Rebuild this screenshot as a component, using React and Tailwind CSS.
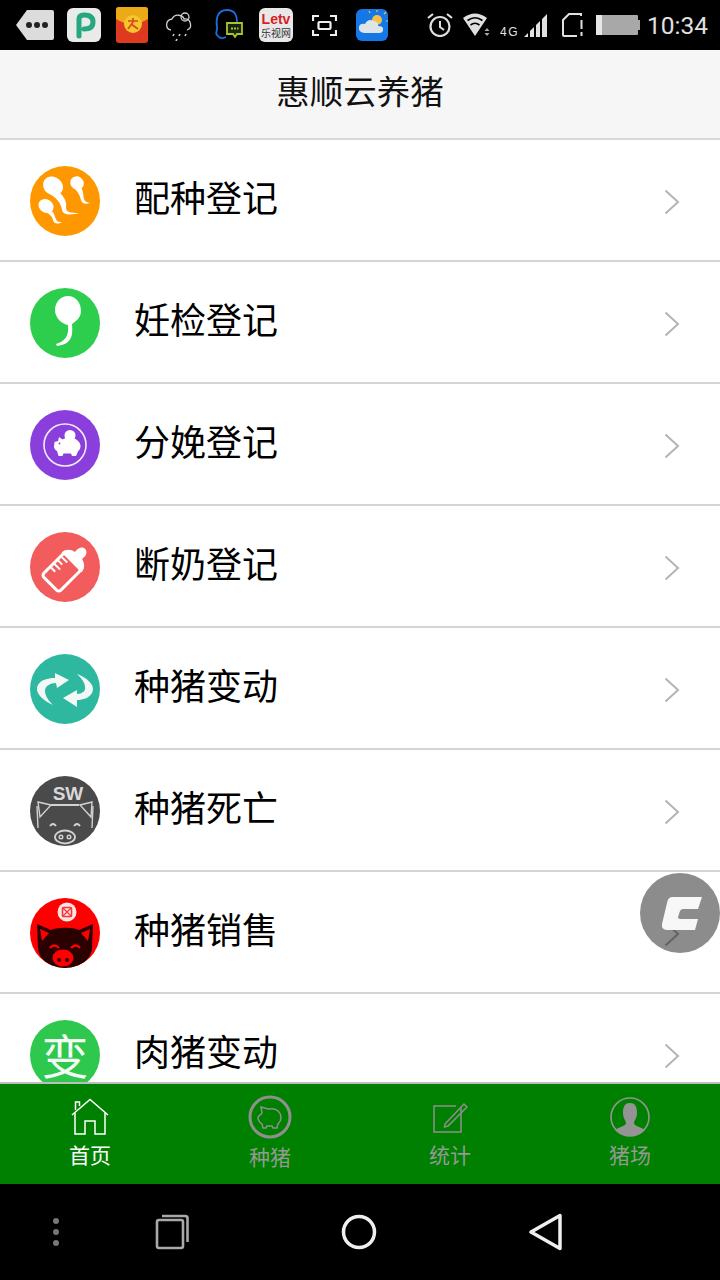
import React from 'react';

const rows = [
  { label: '配种登记', bg: 'bg-[#ff9800]', icon: <SpermsIcon /> },
  { label: '妊检登记', bg: 'bg-[#2dce4e]', icon: <SpermIcon /> },
  { label: '分娩登记', bg: 'bg-[#8a3fdc]', icon: <PiggyIcon /> },
  { label: '断奶登记', bg: 'bg-[#f25c5c]', icon: <BottleIcon /> },
  { label: '种猪变动', bg: 'bg-[#2fb8a0]', icon: <SwapIcon /> },
  { label: '种猪死亡', bg: 'bg-[#4a4a4a]', icon: <DeadPigIcon /> },
  { label: '种猪销售', bg: 'bg-[#ff0000]', icon: <SalePigIcon /> },
  { label: '肉猪变动', bg: 'bg-[#2dc84d]', icon: <span className="text-[47px] leading-[68px] text-[#f4fbf5] block text-center">变</span> },
];

function SpermsIcon() {
  return (
    <svg width="70" height="70" viewBox="0 0 70 70" fill="#fff">
      <ellipse cx="23" cy="20" rx="10.5" ry="9" transform="rotate(35 23 20)" />
      <path d="M27 24C35 31 37 36 36 42C36 46 40 47 49 47C40 49.5 33 49 32 44C31 38 28 33 20 28Z" />
      <ellipse cx="47" cy="17" rx="7" ry="6.5" transform="rotate(35 47 17)" />
      <path d="M50 20C54 25 53 30 54 33C55 36 57 36 60 37C56 38.5 52 38 51 34C50 30 49 27 44 22Z" />
      <ellipse cx="16" cy="40" rx="8" ry="6.5" transform="rotate(30 16 40)" />
      <path d="M19 43C25 46 24 50 26 53C27 56 29 56 32 56C28 58.5 24 58 23 54C22 50 20 48 13 45Z" />
    </svg>
  );
}

function SpermIcon() {
  return (
    <svg width="70" height="70" viewBox="0 0 70 70" fill="#fff">
      <path d="M38 8C46 8 51 15 51 23C51 30 45 34 42 36C43 48 42 56 27 58L26 56C36 53 39 47 38 37C32 36 25 30 25 22C25 14 31 8 38 8Z" />
    </svg>
  );
}

function PiggyIcon() {
  return (
    <svg width="70" height="70" viewBox="0 0 70 70">
      <circle cx="35" cy="35" r="21" fill="none" stroke="#f3ecfc" strokeWidth="1.6" />
      <circle cx="40" cy="25.5" r="5.5" fill="#fff" />
      <path d="M24.5 32L28 31L29 27L32.5 29.5C36 27.5 44 27.5 47 30C51 33 52 38 48 41.5L46 46L42 46L41 43.5L33.5 43.5L32.5 46L28.5 46L27 41C25.5 40 24 38.5 24 36.5Z" fill="#fff" />
      <circle cx="29.5" cy="33.5" r="0.9" fill="#8a3fdc" />
    </svg>
  );
}

function BottleIcon() {
  return (
    <svg width="70" height="70" viewBox="0 0 70 70">
      <g transform="translate(33 39) rotate(45)">
        <rect x="-12" y="-14" width="24" height="32" rx="3" fill="none" stroke="#fff" strokeWidth="3" />
        <path d="M-14 -12C-14 -18 -9 -21 -5 -22L5 -22C9 -21 14 -18 14 -12Z" fill="#fff" />
        <path d="M-5 -21C-5 -25 -6 -26 -4 -29C-2 -32 2 -32 4 -29C6 -26 5 -25 5 -21Z" fill="#fff" />
        <path d="M-11 -9H-3M-11 -4H-5M-11 1H-3M-11 6H-5" stroke="#fff" strokeWidth="2" />
      </g>
    </svg>
  );
}

function SwapIcon() {
  return (
    <svg width="70" height="70" viewBox="0 0 70 70" fill="#f2f8f6">
      <path d="M23 51C12 46 4 38 8 31C11 26 17 24 25 24L25 19L39 26L27 34L26 29C20 29 15 32 15 37C15 42 19 47 23 51Z" />
      <path d="M47 20C58 24 66 32 62 39C59 44 53 46 47 46L47 53L33 44L47 36L47 40C52 40 56 37 55 33C55 28 51 24 47 20Z" />
    </svg>
  );
}

function DeadPigIcon() {
  return (
    <svg width="70" height="70" viewBox="0 0 70 70" fill="none" stroke="#d2d2d2" strokeWidth="1.4">
      <text x="38" y="24" textAnchor="middle" fontFamily="Liberation Sans" fontWeight="700" fontSize="19" fill="#d8d8d8" stroke="none">SW</text>
      <path d="M21 29H49" strokeWidth="1.8" />
      <path d="M8 26L21 29L10 41ZM62 26L50 29L61 41Z" />
      <path d="M7 30L8 52M63 30L62 52" />
      <path d="M20 50Q23 46 26 50M44 50Q47 46 50 50" strokeWidth="2" />
      <ellipse cx="35" cy="61" rx="10" ry="6.5" strokeWidth="1.8" />
      <circle cx="31" cy="61" r="1.8" />
      <circle cx="39" cy="61" r="1.8" />
    </svg>
  );
}

function SalePigIcon() {
  return (
    <svg width="70" height="70" viewBox="0 0 70 70">
      <circle cx="37" cy="14" r="9.5" fill="#fbe6e6" />
      <rect x="32.5" y="9.5" width="9" height="9" rx="1" fill="none" stroke="#ff3030" strokeWidth="1.6" />
      <path d="M33 10L41 18M41 10L33 18" stroke="#ff3030" strokeWidth="1.2" />
      <path d="M7 26L21 32C27 29 43 29 49 32L63 26L62 50C62 60 50 71 35 71C20 71 8 60 8 50Z" fill="#2a0000" />
      <path d="M10 31L19 35L12 43ZM60 31L51 35L58 43Z" fill="#ff0000" />
      <path d="M20 50Q24 45 29 50M41 50Q46 45 50 50" fill="none" stroke="#ff0000" strokeWidth="2.4" />
      <ellipse cx="33" cy="60" rx="10.5" ry="8.5" fill="#ff0000" />
      <circle cx="29" cy="62" r="2" fill="#2a0000" />
      <circle cx="37" cy="62" r="2" fill="#2a0000" />
    </svg>
  );
}

function StatusBar() {
  return (
    <div className="h-[50px] shrink-0 bg-black flex items-center pl-[15px]">
      <svg width="40" height="32" viewBox="0 0 40 32" className="mr-[12px]">
        <path d="M12 1H37Q39 1 39 3V29Q39 31 37 31H12L1 16Z" fill="#dcdcdc" />
        <circle cx="14" cy="16" r="3" fill="#222" />
        <circle cx="22" cy="16" r="3" fill="#222" />
        <circle cx="30" cy="16" r="3" fill="#222" />
      </svg>
      <svg width="34" height="34" viewBox="0 0 34 34" className="mr-[15px]">
        <rect width="34" height="34" rx="6" fill="#e8ebe8" />
        <path d="M12 28V11Q12 7 17 7Q26 7 26 14Q26 21 17 21" fill="none" stroke="#27a77f" strokeWidth="5" strokeLinecap="round" />
      </svg>
      <svg width="32" height="36" viewBox="0 0 32 36" className="mr-[17px]">
        <rect width="32" height="36" rx="3" fill="#dd3a1f" />
        <path d="M0 3Q0 0 3 0H29Q32 0 32 3V12Q16 22 0 12Z" fill="#ecaa17" />
        <circle cx="17" cy="17" r="9" fill="#f4c52c" />
        <path d="M12 14H22M17 11V15L12 22M15 17L22 22" fill="none" stroke="#d8481c" strokeWidth="1.6" />
      </svg>
      <svg width="30" height="32" viewBox="0 0 30 32" className="mr-[19px]" fill="none" stroke="#cfcfcf" strokeWidth="1.3">
        <path d="M6 21C0 20 0 11 7 10C10 4 18 6 19 10C26 9 28 19 22 21" />
        <circle cx="20" cy="8" r="4" />
        <path d="M9 25L8 27M15 25L14 27M21 25L20 27M12 30L11 32" strokeWidth="1.6" />
      </svg>
      <svg width="30" height="32" viewBox="0 0 30 32" className="mr-[15px]" fill="none">
        <path d="M4 27C0 25 4 21 3 18C2 12 2 1 13 1C22 1 23 8 23 13" stroke="#1a6fe0" strokeWidth="1.8" />
        <path d="M4 27C6 30 10 29 12 28" stroke="#1a6fe0" strokeWidth="1.8" />
        <path d="M13 14H28V25H23L21 28L19 25H13Z" fill="#16240c" stroke="#a6c62c" strokeWidth="1.8" />
        <path d="M17 19.5H24.5" stroke="#a6c62c" strokeWidth="2" strokeDasharray="2 1" />
      </svg>
      <div className="w-[34px] h-[34px] mr-[19px] rounded-[6px] bg-[#e8e8e8] flex flex-col items-center justify-center leading-none overflow-hidden">
        <span className="text-[#d81f26] text-[14px] font-bold font-['Liberation_Sans',sans-serif] h-[15px] leading-[15px]">Letv</span>
        <span className="text-[#333] text-[10px] h-[12px] leading-[12px] font-['Noto_Sans_CJK_SC',sans-serif]">乐视网</span>
      </div>
      <svg width="25" height="21" viewBox="0 0 25 21" className="mr-[19px]" fill="none" stroke="#f0f0f0" strokeWidth="2.2">
        <path d="M1 6V1H7M18 1H24V6M24 15V20H18M7 20H1V15" />
        <rect x="6.5" y="7" width="12" height="7" rx="1" />
      </svg>
      <svg width="32" height="32" viewBox="0 0 32 32" className="mr-[39px]">
        <rect width="32" height="32" rx="6" fill="#1478e6" />
        <circle cx="21" cy="11" r="5" fill="#f3c04a" />
        <path d="M21 3V1M28 5L30 3M30 12H32M14 4L13 2" stroke="#f3c04a" strokeWidth="1.2" />
        <path d="M8 24Q2 23 3 18Q4 14 9 15Q12 9 18 12Q23 13 22 17Q28 17 27 21Q27 24 23 24Z" fill="#dfe5e6" />
      </svg>
      <svg width="26" height="24" viewBox="0 0 26 24" className="mr-[10px]" fill="none" stroke="#e0e0e0" strokeWidth="2.2">
        <circle cx="13" cy="13.5" r="9.5" />
        <path d="M13 8V14L17 17" strokeWidth="2" />
        <path d="M1 5L6 1M25 5L20 1" />
      </svg>
      <svg width="28" height="24" viewBox="0 0 28 24" className="mr-[9px]">
        <path d="M0 5Q12 -4 24 5L12 23Z" fill="#e0e0e0" />
        <path d="M4.5 7.5Q12 2 19.5 7.5M7.5 12Q12 8.5 16.5 12" fill="none" stroke="#000" strokeWidth="1.6" />
        <path d="M24 15L26.5 18H21.5ZM24 23L26.5 20H21.5Z" fill="#aaa" />
      </svg>
      <span className="mr-[6px] mt-[14px] text-[#e0e0e0] text-[12px] leading-[12px] w-[18px] tracking-[1.5px] font-['Liberation_Sans',sans-serif]">4G</span>
      <svg width="24" height="23" viewBox="0 0 24 23" className="mr-[14px] mt-[1px]" fill="#e0e0e0">
        <path d="M0 23L4 19V23ZM6 17L10 13V23H6ZM12 11L16 7V23H12ZM18 5L23 0V23H18Z" />
      </svg>
      <svg width="21" height="24" viewBox="0 0 21 24" className="mr-[13px]" fill="none" stroke="#e0e0e0" strokeWidth="2">
        <path d="M15 23H2Q1 23 1 22V7L7 1H19V3" />
        <path d="M19.5 7V16M19.5 19V23" />
      </svg>
      <div className="w-[44px] h-[20px] mr-[7px] flex">
        <div className="w-[6px] bg-[#e6e6e6]" />
        <div className="w-[36px] bg-[#a8a8a8] rounded-r-[1px]" />
        <div className="w-[2px] h-[10px] my-auto bg-[#a8a8a8]" />
      </div>
      <span className="text-[#e0e0e0] text-[24.5px] mt-[3px] font-['Roboto',sans-serif]">10:34</span>
    </div>
  );
}

function Row({ label, bg, icon }) {
  return (
    <div className="h-[122px] shrink-0 border-b-2 border-[#d4d4d4] bg-white flex items-center pt-[2px] pl-[30px] pr-[40px]">
      <div className={`w-[70px] h-[70px] rounded-full overflow-hidden shrink-0 ${bg}`}>{icon}</div>
      <span className="ml-[34px] flex-1 text-[36px] text-black leading-none -mt-[10px]">{label}</span>
      <svg width="16" height="26" viewBox="0 0 16 26" fill="none" stroke="#b4b4b4" strokeWidth="2" className="mt-[2px]">
        <path d="M1.5 1.5L14 13L1.5 24.5" />
      </svg>
    </div>
  );
}

function Tab({ label, active, labelClass, children }) {
  return (
    <div className="flex flex-col items-center pt-[12px]">
      <div className="h-[42px] flex items-center justify-center">{children}</div>
      <span className={`text-[21px] leading-[30px] ${active ? 'text-white' : 'text-[#929a92]'} ${labelClass}`}>{label}</span>
    </div>
  );
}

function TabBar() {
  return (
    <div className="h-[102px] shrink-0 border-t-2 border-[#bdbdbd] bg-[#008000] grid grid-cols-4">
      <Tab label="首页" active labelClass="mt-[1px]">
        <svg width="38" height="38" viewBox="0 0 38 38" fill="none" stroke="#fff" strokeWidth="1.5">
          <path d="M1 17L19 1.5L37 17" />
          <path d="M4.5 12V4H8.5V8" />
          <path d="M4 15V36H14V23H24V36H34V15" />
        </svg>
      </Tab>
      <Tab label="种猪" labelClass="mt-[3px]">
        <svg width="44" height="44" viewBox="0 0 44 44" fill="none" stroke="#8f8f8f">
          <circle cx="22" cy="22" r="20" strokeWidth="3" />
          <path d="M13 12L20 14C26 13 33 15 33 23C33 26 31 28 30 29L29 33H25L24 31H19L18 33H15L14 29C12 28 10 25 10 23C10 20 13 20 14 18Z" strokeWidth="1.5" />
        </svg>
      </Tab>
      <Tab label="统计" labelClass="mt-[1px]">
        <svg width="36" height="34" viewBox="0 0 36 34" fill="none" stroke="#8f8f8f">
          <path d="M29 8V32H2V6H24" strokeWidth="1.5" />
          <path d="M13 24L32 4L35 7L16 26L12.5 27Z" strokeWidth="1.5" />
        </svg>
      </Tab>
      <Tab label="猪场" labelClass="mt-[1px]">
        <svg width="40" height="40" viewBox="0 0 40 40">
          <circle cx="20" cy="20" r="19" fill="none" stroke="#949494" strokeWidth="1.6" />
          <path d="M20 6C26 6 27 11 27 16C27 21 24 24 24 26C24 29 31 30 35 33C31 37 26 39 20 39C14 39 9 37 5 33C9 30 16 29 16 26C16 24 13 21 13 16C13 11 14 6 20 6Z" fill="#949494" />
        </svg>
      </Tab>
    </div>
  );
}

function NavBar() {
  return (
    <div className="h-[96px] shrink-0 bg-black flex items-center pl-[53px]">
      <div className="flex flex-col gap-[5px] mr-[96px]">
        <div className="w-[6px] h-[6px] rounded-full bg-[#777]" />
        <div className="w-[6px] h-[6px] rounded-full bg-[#777]" />
        <div className="w-[6px] h-[6px] rounded-full bg-[#777]" />
      </div>
      <svg width="34" height="36" viewBox="0 0 34 36" fill="none" stroke="#a9a9a9" strokeWidth="2.6" className="mr-[152px]">
        <rect x="2" y="6" width="26" height="28" rx="2" />
        <path d="M7 2H30Q32.5 2 32.5 4V28" />
      </svg>
      <svg width="36" height="36" viewBox="0 0 36 36" fill="none" stroke="#efefef" strokeWidth="3.5" className="mr-[152px]">
        <circle cx="18" cy="18" r="15.5" />
      </svg>
      <svg width="34" height="38" viewBox="0 0 34 38" fill="none" stroke="#efefef" strokeWidth="3.5" strokeLinejoin="round">
        <path d="M31 2.5V35.5L2 19Z" />
      </svg>
    </div>
  );
}

export default function App() {
  return (
    <div className="relative w-[720px] h-[1280px] flex flex-col overflow-hidden bg-white font-['Noto_Sans_CJK_SC',sans-serif]">
      <StatusBar />
      <div className="h-[90px] shrink-0 bg-[#f6f6f6] border-b-2 border-[#d8d8d8] flex items-center justify-center">
        <span className="text-[33.5px] text-[#111] leading-none -mt-[8px]">惠顺云养猪</span>
      </div>
      <div className="flex-1 min-h-0 overflow-hidden flex flex-col">
        {rows.map((r) => (
          <Row key={r.label} {...r} />
        ))}
      </div>
      <TabBar />
      <NavBar />

      {/* floating button sits over the list */}
      <div className="absolute left-[640px] top-[873px] w-[80px] h-[80px] rounded-full bg-black/45">
        <svg width="80" height="80" viewBox="0 0 80 80" fill="#f7f7f7">
          <path d="M32 24L62 24L58 36L43 36Q41 36 40 38L38 44Q38 46 40 46L58 46L55 57L28 57Q21 57 22 51L27 30Q28 24 32 24Z" />
        </svg>
      </div>
    </div>
  );
}
